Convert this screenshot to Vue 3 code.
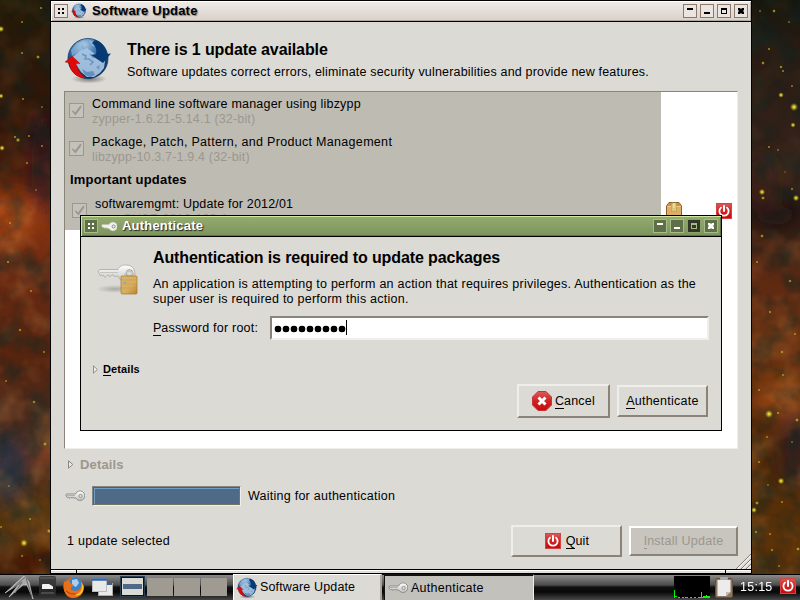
<script setup>
const stars = [
  [1, 29, 2.2], [22, 22, 1], [22, 53, 1], [41, 8, 1], [38, 57, 1.4], [1, 96, 1.8], [23, 99, 1], [42, 107, 0.8], [15, 137, 1.1],
  [18, 140, 1.6], [29, 136, 1], [2, 148, 2], [27, 163, 1], [42, 146, 1], [36, 190, 0.8], [10, 223, 1], [8, 262, 1.1], [31, 291, 1],
  [20, 330, 1.2], [44, 352, 1], [6, 381, 0.9], [34, 402, 1.2], [45, 444, 1.4], [9, 486, 0.8], [1, 527, 1], [30, 519, 1], [24, 543, 2.6],
  [22, 556, 1], [49, 531, 1.6], [40, 560, 0.8],
  [760, 11, 0.8], [774, 11, 1.3], [789, 22, 0.8], [769, 49, 1], [763, 63, 1.3], [781, 67, 1.2], [783, 71, 1], [792, 86, 0.9],
  [781, 95, 1.9], [794, 107, 2.8], [793, 125, 1.8], [769, 147, 1], [778, 150, 0.8], [762, 192, 2.2], [763, 198, 1.4], [792, 189, 1],
  [796, 198, 2.2], [762, 236, 1.3], [785, 172, 0.7], [757, 262, 1], [790, 281, 1.2], [770, 312, 1.1], [795, 334, 1], [782, 352, 1.2],
  [759, 390, 1], [783, 375, 1], [769, 414, 2.8], [778, 413, 1.1], [797, 420, 1.4], [767, 437, 0.9], [792, 442, 0.8], [759, 462, 1],
  [768, 485, 0.8], [781, 481, 2.3], [757, 503, 1.4], [754, 510, 2], [782, 502, 1], [756, 532, 1.1], [770, 534, 1], [772, 550, 1.1],
  [798, 549, 1.4], [779, 566, 0.9]
]
const rows = [
  { name: 'Command line software manager using libzypp', pkg: 'zypper-1.6.21-5.14.1 (32-bit)' },
  { name: 'Package, Patch, Pattern, and Product Management', pkg: 'libzypp-10.3.7-1.9.4 (32-bit)' }
]
const controls = ['shade', 'min', 'max', 'close']
</script>

<template>
  <div class="desktop">
    <svg class="icon-defs" width="0" height="0">
      <defs>
        <radialGradient id="sea" cx=".42" cy=".15" r=".85">
          <stop offset="0" stop-color="#a9c8e4" /><stop offset=".3" stop-color="#4f84b9" />
          <stop offset=".6" stop-color="#1b528c" /><stop offset="1" stop-color="#06305e" />
        </radialGradient>
        <linearGradient id="redsq" x2="0" y2="1"><stop offset="0" stop-color="#dc5a5a" /><stop offset=".5" stop-color="#cf2323" /><stop offset="1" stop-color="#c60a0a" /></linearGradient>
        <linearGradient id="keyg" x2="0" y2="1"><stop offset="0" stop-color="#fff" /><stop offset="1" stop-color="#c2c2bf" /></linearGradient>
        <linearGradient id="lockg" x2="1" y2="1"><stop offset="0" stop-color="#d9b56c" /><stop offset=".6" stop-color="#d8ad5e" /><stop offset="1" stop-color="#b78331" /></linearGradient>
        <radialGradient id="shade"><stop offset="0" stop-color="#000" stop-opacity=".45" /><stop offset="1" stop-color="#000" stop-opacity="0" /></radialGradient>
        <symbol id="globe" viewBox="0 0 48 48">
          <ellipse cx="25" cy="43" rx="18" ry="4.5" fill="url(#shade)" />
          <circle cx="24" cy="22.5" r="20" fill="url(#sea)" stroke="#0d3b6b" stroke-width=".8" />
          <path d="M7 14 13 7 21 5 17 10 19 14 8 20Z M25 4 33 7 34 11 28 10Z" fill="#a9c8e4" opacity=".55" />
          <path d="M5 24 11 19 16 15 23 12 27 15 31 18 36 22 41 25 40 32 36 37 30 41 23 41 17 36 13 30 9 27Z" fill="#a9c5e2" opacity=".92" />
          <path d="M18 18 22 20 21 23 25 23 29 26 26 29M26 18 30 22" fill="none" stroke="#6d96c2" stroke-width="1.6" />
          <path d="M18 33 23 36 29 35 31 39 26 41 21 39Z" fill="#4d80b5" opacity=".75" />
          <path d="M32 31 36 29 35 34Z" fill="#5c8cbd" opacity=".7" />
          <path d="M31 4C38 6 42 11 42.500 18L47 17.500 39 27 27 19 32 18C33 14 32 10 28 7Z" fill="#063a73" />
          <path d="M1 26 8 20 16 27.500 12 27.500C13 33 17 39 22 42 13 42 6 36 5.500 27Z" fill="#e00808" stroke="#b80000" stroke-width=".4" />
        </symbol>
        <symbol id="power" viewBox="0 0 16 16">
          <rect x=".5" y=".5" width="15" height="15" fill="url(#redsq)" stroke="#d04444" />
          <path d="M5 4.6A4.6 4.6 0 1 0 11 4.6" fill="none" stroke="#fff" stroke-width="1.8" stroke-linecap="round" />
          <path d="M8 3v5" stroke="#fff" stroke-width="2" stroke-linecap="round" />
        </symbol>
        <symbol id="key" viewBox="0 0 20 12">
          <path d="M1 4.5 2 4H10.5A4.8 4.8 0 1 1 10.8 8H9L8 7.2 7 8.3 6 7.2 5 8.3 3.8 7.3 2.5 7.8 1 6Z" fill="url(#keyg)" stroke="#858582" stroke-width=".9" />
          <circle cx="15.6" cy="6" r="1.7" fill="#dcdad5" stroke="#888" stroke-width=".8" />
          <path d="M2 5.6H10" stroke="#999" stroke-width=".7" />
        </symbol>
      </defs>
    </svg>

    <svg class="wallpaper" width="800" height="600" viewBox="0 0 800 600">
      <defs>
        <linearGradient id="skyL" x2="0" y2="1">
          <stop offset="0" stop-color="#221a08" /><stop offset=".12" stop-color="#2c170a" /><stop offset=".25" stop-color="#3c1709" />
          <stop offset=".36" stop-color="#8a3611" /><stop offset=".45" stop-color="#6b2a12" /><stop offset=".6" stop-color="#55240f" />
          <stop offset=".75" stop-color="#4b2f25" /><stop offset=".85" stop-color="#5c360f" /><stop offset="1" stop-color="#351204" />
        </linearGradient>
        <linearGradient id="skyR" x2="0" y2="1">
          <stop offset="0" stop-color="#16170f" /><stop offset=".1" stop-color="#2a1c14" /><stop offset=".28" stop-color="#35231b" />
          <stop offset=".35" stop-color="#2a1a16" /><stop offset=".45" stop-color="#5c2812" /><stop offset=".6" stop-color="#6b3210" />
          <stop offset=".75" stop-color="#4c2608" /><stop offset=".9" stop-color="#5d3308" /><stop offset="1" stop-color="#4b2708" />
        </linearGradient>
        <filter id="soft" x="-50%" y="-50%" width="200%" height="200%"><feGaussianBlur stdDeviation="9" /></filter>
        <filter id="cloud" x="0" y="0" width="100%" height="100%">
          <feTurbulence type="fractalNoise" baseFrequency=".03" numOctaves="3" seed="7" />
          <feColorMatrix values="0 0 0 0 .75  0 0 0 0 .32  0 0 0 0 .08  2.4 0 0 0 -1.05" />
        </filter>
        <filter id="dark" x="0" y="0" width="100%" height="100%">
          <feTurbulence type="fractalNoise" baseFrequency=".04" numOctaves="4" seed="21" />
          <feColorMatrix values="0 0 0 0 0  0 0 0 0 .02  0 0 0 0 .02  0 2.6 0 0 -1.1" />
        </filter>
        <radialGradient id="glow"><stop offset="0" stop-color="#ffff70" /><stop offset=".35" stop-color="#d8c820" stop-opacity=".85" /><stop offset="1" stop-color="#a08a10" stop-opacity="0" /></radialGradient>
      </defs>
      <rect width="400" height="600" fill="url(#skyL)" />
      <rect x="400" width="400" height="600" fill="url(#skyR)" />
      <g filter="url(#soft)">
        <ellipse cx="10" cy="215" rx="26" ry="18" fill="#b64a14" opacity=".7" />
        <ellipse cx="42" cy="165" rx="10" ry="55" fill="#27162a" opacity=".7" />
        <ellipse cx="8" cy="470" rx="18" ry="34" fill="#29344a" opacity=".8" />
        <ellipse cx="46" cy="448" rx="12" ry="20" fill="#b05020" opacity=".6" />
        <ellipse cx="30" cy="525" rx="24" ry="18" fill="#80500f" opacity=".5" />
        <ellipse cx="42" cy="560" rx="14" ry="18" fill="#4c0a04" opacity=".8" />
        <ellipse cx="780" cy="400" rx="30" ry="20" fill="#a04a0c" opacity=".7" />
        <ellipse cx="795" cy="445" rx="14" ry="40" fill="#302028" opacity=".7" />
        <ellipse cx="777" cy="215" rx="20" ry="10" fill="#100a0a" opacity=".7" />
        <ellipse cx="760" cy="180" rx="18" ry="30" fill="#4a261c" opacity=".5" />
      </g>
      <rect y="190" width="400" height="410" filter="url(#cloud)" opacity=".3" />
      <rect width="400" height="190" filter="url(#cloud)" opacity=".14" />
      <rect x="400" width="400" height="230" filter="url(#cloud)" opacity=".08" />
      <rect x="400" y="230" width="400" height="370" filter="url(#cloud)" opacity=".25" />
      <rect width="800" height="600" filter="url(#dark)" opacity=".4" />
      <circle v-for="(s, i) in stars" :key="i" :cx="s[0]" :cy="s[1]" :r="s[2] * 1.5" fill="url(#glow)" :opacity="s[2] > 1.7 ? 1 : 0.75" />
    </svg>

    <section class="window updater">
      <header class="titlebar">
        <i class="tb-btn menu"><b class="dots"></b></i>
        <svg class="tb-globe"><use href="#globe" /></svg>
        <h1>Software Update</h1>
        <i v-for="c in controls" :key="c" class="tb-btn"><b :class="c"></b></i>
      </header>
      <div class="content">
        <div class="intro">
          <svg class="big-globe"><use href="#globe" /></svg>
          <div>
            <h2>There is 1 update available</h2>
            <p class="lede">Software updates correct errors, eliminate security vulnerabilities and provide new features.</p>
          </div>
        </div>
        <div class="list">
          <div class="selection">
            <div v-for="r in rows" :key="r.pkg" class="row">
              <span class="check"><svg width="15" height="15" viewBox="0 0 15 15"><path d="M2.500 8 4 7.500 6 9.500 11 3 12.500 2.500 12 5 6.500 12.500Z" /></svg></span>
              <div><p>{{ r.name }}</p><p class="dim">{{ r.pkg }}</p></div>
            </div>
            <h3>Important updates</h3>
            <div class="row last">
              <span class="check"><svg width="15" height="15" viewBox="0 0 15 15"><path d="M2.500 8 4 7.500 6 9.500 11 3 12.500 2.500 12 5 6.500 12.500Z" /></svg></span>
              <div><p class="tight">softwaremgmt: Update for 2012/01</p><p class="dim">openSUSE-2012-100-1</p></div>
            </div>
          </div>
          <div class="status">
            <svg class="box" width="16" height="16" viewBox="0 0 16 16">
              <path d="M.5 4 3 .5H13L15.500 4V15.500H.5Z" fill="#e0ac69" stroke="#8f5f22" />
              <path d="M1.500 4.500H14.500" stroke="#f4cd92" /><path d="M3 1 1.500 4H5L6 1Z M13 1 14.500 4H11L10 1Z" fill="#c98d48" />
              <path d="M5.500 1H10.500V10L9 9 8 10 7 9 5.500 10Z" fill="#d9c77a" stroke="#b49a4c" stroke-width=".6" /><path d="M8 1V6" stroke="#f7eeb5" />
            </svg>
            <svg width="16" height="16"><use href="#power" /></svg>
          </div>
        </div>
        <div class="details">
          <svg width="6" height="9" viewBox="0 0 6 9"><path d="M.5.8 4.800 4.500.5 8.200Z" fill="#e9e8e5" stroke="#8a867c" /></svg>
          <b>Details</b>
        </div>
        <div class="progress-row">
          <svg width="20" height="12"><use href="#key" /></svg>
          <div class="progress"></div>
          <span>Waiting for authentication</span>
        </div>
        <footer>
          <span>1 update selected</span>
          <button class="quit"><svg width="16" height="16"><use href="#power" /></svg><span><u>Q</u>uit</span></button>
          <button class="install" disabled><span><u>I</u>nstall Update</span></button>
        </footer>
        <svg class="grip" width="16" height="15" viewBox="0 0 16 15">
          <path d="M1 15 16 0M6 15 16 5M11 15 16 10" stroke="#85817a" /><path d="M2.500 15 16 1.500M7.500 15 16 6.500M12.500 15 16 11.500" stroke="#fff" />
        </svg>
      </div>
      <div class="handle"><i></i><i></i><i></i></div>
    </section>

    <section class="window auth">
      <header class="titlebar green">
        <i class="tb-btn menu"><b class="dots"></b></i>
        <svg class="tb-key" viewBox="0 0 16 10"><path d="M.5 3.500 2 3H8A4.400 4.400 0 1 1 8 7H6L5 6 4 7 3 6 1.500 6Z" fill="#f1f1ee" stroke="#b9bfae" stroke-width=".6" /><circle cx="12.600" cy="5" r="1.500" fill="#eee" stroke="#858b7b" /></svg>
        <h1>Authenticate</h1>
        <i v-for="c in controls" :key="c" class="tb-btn" :class="{ pressed: c === 'max' }"><b :class="c"></b></i>
      </header>
      <div class="auth-body">
        <svg class="keylock" width="44" height="34" viewBox="0 0 44 34">
          <ellipse cx="18" cy="25" rx="19" ry="4" fill="url(#shade)" opacity=".5" />
          <path d="M1 7 3 5.500H21C22 2 26 1 29 1 35 1 38 5 38 10 38 15 34 18 29 18 25 18 22 15 21 12L18 12.500 15 10.500 13 13 11 10.500 8 13.500 6 11 3 11.500Z" fill="url(#keyg)" stroke="#aaa9a5" stroke-width=".8" />
          <path d="M3 8.500H21" stroke="#c4c4c0" /><circle cx="32.500" cy="9" r="3.300" fill="#dcdad5" stroke="#9a9a98" />
          <path d="M28 13V10Q32 4 37 10V13" fill="none" stroke="#c4c6c4" stroke-width="1.400" />
          <rect x="24" y="12" width="16" height="18" rx="1" fill="url(#lockg)" stroke="#a4782c" stroke-width=".7" />
          <path d="M24.500 16H39.500M24.500 20H39.500M24.500 24H39.500" stroke="#c59a4c" stroke-width=".6" /><path d="M25.500 19 29 17.500V19Z" fill="#61a1e2" />
        </svg>
        <div class="auth-main">
          <h2>Authentication is required to update packages</h2>
          <p class="why">An application is attempting to perform an action that requires privileges. Authentication as the<br>super user is required to perform this action.</p>
          <label><span class="prompt"><u>P</u>assword for root:</span><span class="entry"><i v-for="n in 9" :key="n" class="bullet"></i><i class="caret"></i></span></label>
        </div>
      </div>
      <div class="auth-details"><svg width="6" height="9" viewBox="0 0 6 9"><path d="M.5.8 4.300 4.500.5 8.200Z" fill="#eee" stroke="#8a867c" stroke-width=".9" /></svg><b><u>D</u>etails</b></div>
      <div class="auth-actions">
        <button class="cancel">
          <svg width="20" height="20" viewBox="0 0 20 20"><path d="M6 .5H14L19.500 6V14L14 19.500H6L.5 14V6Z" fill="url(#redsq)" stroke="#c43636" /><path d="M6.500 6.500 13.500 13.500M13.500 6.500 6.500 13.500" stroke="#fff" stroke-width="3" /></svg>
          <span><u>C</u>ancel</span>
        </button>
        <button class="ok"><span><u>A</u>uthenticate</span></button>
      </div>
    </section>

    <nav class="taskbar">
      <svg class="menu-ico" width="30" height="24" viewBox="0 0 30 24"><path d="M20 1 1 18 15 9 5 22 19 10 23 10 29 24 25 7Z" fill="#a9a9a9" stroke="#dedede" stroke-width=".6" /><path d="M21 2 9 13 18 7 11 18M22 3 28 22" stroke="#6c6c6c" fill="none" /></svg>
      <svg class="files-ico" width="17" height="22" viewBox="0 0 17 22"><rect width="17" height="22" rx="2" fill="#303030" opacity=".8" /><path d="M1 2H16" stroke="#666" /><path d="M3 13V8.500L4 8H10L14 10.500V13Z" fill="#f2f2f2" /><path d="M2 17H15" stroke="#4a4a4a" stroke-width="2" /></svg>
      <svg class="fox-ico" width="21" height="21" viewBox="0 0 21 21">
        <circle cx="10.500" cy="10.500" r="10" fill="#e66a13" /><circle cx="12" cy="7.500" r="7" fill="#3f7fc4" /><path d="M9 3 14 2 16 6 13 10 9 8Z" fill="#a7d0ee" />
        <path d="M1 4 3 5 6 3 7 6 11 8 8 10 8 13 12 14 16 13 19 8 18 4 21 10C21 17 16 21 10 21 4 21-1 15 1 4Z" fill="#e87018" /><path d="M18 5C20 10 19 17 11 18 17 20 21 15 20.500 9Z" fill="#f9c531" /><path d="M3 14Q7 18 13 17" stroke="#b63a0b" fill="none" />
      </svg>
      <svg class="win-ico" width="21" height="19" viewBox="0 0 21 19"><rect x="6.500" y="5.500" width="14" height="12" fill="#e9e9e9" stroke="#aaa" /><path d="M7 6H20" stroke="#3565a4" stroke-width="2" /><rect x=".5" y=".5" width="14" height="13" fill="#e9e9e9" stroke="#bbb" /><path d="M0 1.500H15" stroke="#3565a4" stroke-width="2.500" /></svg>
      <div class="pager"><i class="current"><b></b></i><i></i><i></i><i></i></div>
      <div class="task"><svg width="22" height="22"><use href="#globe" /></svg><span>Software Update</span></div>
      <div class="task active"><svg width="20" height="12"><use href="#key" /></svg><span>Authenticate</span></div>
      <svg class="cpu" width="36" height="22" viewBox="0 0 36 22"><rect width="36" height="22" /><path d="M.5 14V22M1 20.500H3M4 21.500H6M8 21.500H10M11 21.500H14M16 21.500H18M20 21.500H22M24 21.500H36M27.500 16V22M29 20.500H35M32.500 19V22M34 20.500H36" stroke="#0f0" /></svg>
      <svg class="clip" width="18" height="21" viewBox="0 0 18 21"><rect x=".5" y="1.500" width="17" height="19" rx="1.500" fill="#8d765c" stroke="#62513f" /><path d="M2.500 3H15.500V15L11 19H2.500Z" fill="#ececec" /><path d="M15.500 15H11V19Z" fill="#bbb" /><rect x="5" width="8" height="3" rx="1" fill="#aaa" /></svg>
      <time>15:15</time>
      <svg class="halt" width="16" height="16"><use href="#power" /></svg>
    </nav>
  </div>
</template>

<style>
html, body { margin: 0; overflow: hidden; }
</style>

<style scoped>
* { box-sizing: border-box; }
h1, h2, h3, p { margin: 0; }
svg { display: block; flex: none; overflow: hidden; }
.desktop { position: relative; width: 800px; height: 600px; overflow: hidden; background: #2a180c; color: #000; font: 12.5px/15px "Liberation Sans", Arial, sans-serif; letter-spacing: .25px; white-space: nowrap; }
.icon-defs { position: absolute; }
.wallpaper { position: absolute; left: 0; top: 0; }
.window { position: absolute; background: #dcdad5; border: 1px solid #000; display: flex; flex-direction: column; }
.updater { left: 50px; top: 0; width: 702px; height: 574px; }
.auth { left: 80px; top: 215px; width: 642px; height: 216px; }

.titlebar { height: 21px; flex: none; display: flex; align-items: center; gap: 3px; padding: 0 3px; border-bottom: 1px solid #000; background: linear-gradient(#efebe8, #d9d1ca); box-shadow: inset 1px 1px #fff, inset -1px -1px #b0a8a0; }
.titlebar h1 { flex: 1; font-size: 13px; line-height: 15px; letter-spacing: .2px; text-shadow: 1px 1px 1px rgba(0, 0, 0, .4); margin-top: -1px; }
.tb-btn { width: 14px; height: 14px; border: 1px solid #8b7a6c; background: #eae5e1; display: flex; align-items: center; justify-content: center; flex: none; }
.tb-globe { width: 16px; height: 16px; margin: 0 2px 0 0; }
.dots { width: 6px; height: 6px; background: linear-gradient(currentColor 2px, transparent 2px 4px, currentColor 4px); -webkit-mask: linear-gradient(90deg, #000 2px, transparent 2px 4px, #000 4px); mask: linear-gradient(90deg, #000 2px, transparent 2px 4px, #000 4px); }
.shade { width: 6px; height: 2px; background: currentColor; margin-bottom: 4px; }
.min { width: 6px; height: 2px; background: currentColor; margin-top: 4px; }
.max { width: 6px; height: 6px; border: 1px solid currentColor; border-top-width: 2px; }
.close { width: 6px; height: 6px; background: currentColor; clip-path: polygon(0 0, 33% 0, 50% 17%, 67% 0, 100% 0, 100% 33%, 83% 50%, 100% 67%, 100% 100%, 67% 100%, 50% 83%, 33% 100%, 0 100%, 0 67%, 17% 50%, 0 33%); }
.green { background: linear-gradient(#94ac70, #7c935c); box-shadow: inset 1px 1px #d0e8a0, inset -1px -1px #5f7345; color: #fff; }
.green h1 { text-shadow: 1px 1px 1px #222; }
.green .tb-btn { background: #5f7048; border-color: #a7bb89; }
.green .tb-btn.pressed { background: #313827; border-color: #8a9f6c; color: #a7bb89; }
.tb-key { width: 16px; height: 11px; margin: 0 2px 0 0; }

.content { position: relative; flex: 1; background: #dcdad5; display: flex; flex-direction: column; padding: 14px 13px 0; border-bottom: 1px solid #000; }
.intro { display: flex; gap: 15px; height: 55px; }
.big-globe { width: 48px; height: 48px; }
h2 { font-size: 16px; line-height: 18px; letter-spacing: -.11px; }
.intro h2 { margin-top: 5px; }
.lede { margin-top: 6px; letter-spacing: .18px; }
.list { width: 674px; height: 358px; display: flex; background: #fff; border: 1px solid #8a8378; border-right-color: #efeeeb; border-bottom-color: #efeeeb; }
.selection { width: 596px; height: 138px; background: #bebbb3; padding: 5px 4px 0; overflow: hidden; }
.row { display: flex; gap: 8px; height: 38px; letter-spacing: .21px; }
.row:nth-child(2) { letter-spacing: .31px; }
.check { width: 15px; height: 15px; border: 1px solid #9b978e; margin-top: 6px; flex: none; background: #c5c2bb; }
.check svg { margin: -1px; fill: #9b978e; }
.dim { color: #9b988e; letter-spacing: .17px; }
.tight { letter-spacing: .18px; }
h3 { font-size: 13px; line-height: 15px; letter-spacing: .2px; margin: -1px 0 0 1px; }
.row.last { margin: 10px 0 0 3px; }
.status { display: flex; gap: 34px; padding: 110px 0 0 5px; }
.status svg:last-child { margin-top: 1px; }
.details { display: flex; align-items: center; gap: 6px; margin: 8px 0 0 4px; height: 15px; color: #9b978e; font-size: 13px; letter-spacing: .15px; }
.progress-row { display: flex; align-items: center; height: 20px; margin-top: 14px; padding-left: 1px; }
.progress { width: 149px; height: 20px; border: 1px solid #8a8378; border-right-color: #efeeeb; border-bottom-color: #efeeeb; background: #4f6a86; box-shadow: inset 1px 1px #605b54, inset -1px -1px #777168, inset 2px 2px #6d9dcb; margin: 0 7px; }
footer { display: flex; align-items: center; height: 32px; margin-top: 19px; }
footer > span { margin-left: 3px; flex: 1; }
button { font: inherit; letter-spacing: inherit; color: inherit; padding: 0; margin: 0; display: flex; align-items: center; justify-content: center; background: #dcdad5; border: 2px solid; border-color: #efeeeb #8a8378 #8a8378 #efeeeb; }
u { text-decoration: none; display: inline-block; box-shadow: 0 1px currentColor; height: 14px; letter-spacing: 0; }
.quit { width: 111px; height: 32px; gap: 5px; padding-left: 1px; }
.install { width: 109px; height: 30px; margin-left: 7px; background: #c8c4be; color: #9b978e; border-color: #fff #8a8378 #8a8378 #fff; }
.grip { position: absolute; right: 0; bottom: 0; }
.handle { height: 3px; display: flex; gap: 1px; background: #000; flex: none; }
.handle i { background: #e2deda; border-top: 1px solid #fff; width: 25px; }
.handle i:nth-child(2) { flex: 1; }

.auth-body { display: flex; gap: 13px; padding: 12px 12px 0 16px; height: 105px; }
.keylock { margin-top: 15px; }
.auth-main { flex: 1; margin-left: -1px; display: flex; flex-direction: column; }
.why { margin-top: 10px; letter-spacing: .24px; }
label { display: flex; align-items: center; margin-top: 8px; height: 24px; }
.prompt { margin-top: 2px; letter-spacing: .22px; }
.entry { display: flex; align-items: center; width: 439px; height: 24px; margin: 1px 0 -1px auto; background: #fff; border: 2px solid; border-color: #8a8378 #efeeeb #efeeeb #8a8378; padding: 1px 0 0 3px; }
.bullet { width: 6px; height: 6px; border-radius: 50%; background: #000; margin-right: 2px; flex: none; box-shadow: 0 0 0 .3px #000; }
.caret { width: 1px; height: 15px; background: #000; margin: -3px 0 0 -1px; }
.auth-details { display: flex; align-items: center; gap: 4px; margin: 20px 0 0 12px; height: 15px; font-size: 11px; letter-spacing: .12px; }
.auth-details u { height: 13px; }
.auth-actions { display: flex; justify-content: flex-end; align-items: center; gap: 7px; margin: 7px 13px 0 0; height: 34px; }
.cancel { width: 93px; height: 34px; gap: 3px; }
.ok { width: 91px; height: 32px; }

.taskbar { position: absolute; left: 0; top: 574px; width: 800px; height: 26px; display: flex; align-items: center; background: linear-gradient(#000 0 1px, #8b8b8b 1px, #4c4c4c 11px, #121212 13px, #080808 18px, #484848); }
.menu-ico { margin-left: 4px; }
.files-ico { margin-left: 5px; }
.fox-ico { margin-left: 7px; }
.win-ico { margin-left: 8px; }
.pager { display: flex; margin-left: 8px; height: 18px; gap: 1px; align-items: stretch; }
.pager i { width: 26px; background: #9f9a92; }
.pager .current { background: #dcdad5; border: 1px solid #111; margin: -1px 2px 0 0; width: 23px; box-shadow: 0 0 0 1px #283e52; padding: 6px 1px; }
.pager b { display: block; height: 5px; background: #4f6a86; }
.task { display: flex; align-items: center; width: 149px; height: 26px; margin-left: 6px; padding-left: 2px; gap: 2px; background: #dcdad5; border-top: 1px solid #fff; border-left: 1px solid #fff; border-right: 2px solid #aaa69f; letter-spacing: .14px; }
.task.active { width: 150px; margin-left: 2px; padding-left: 3px; background: #c3c1bb; border: 1px solid #111; border-width: 2px 1px 0 1px; gap: 3px; border-right-color: #eee; letter-spacing: .27px; }
.cpu { margin-left: auto; }
.clip { margin-left: 5px; }
time { color: #fff; margin-left: 7px; width: 33px; }
.halt { margin: -2px 4px 0 7px; }
</style>
